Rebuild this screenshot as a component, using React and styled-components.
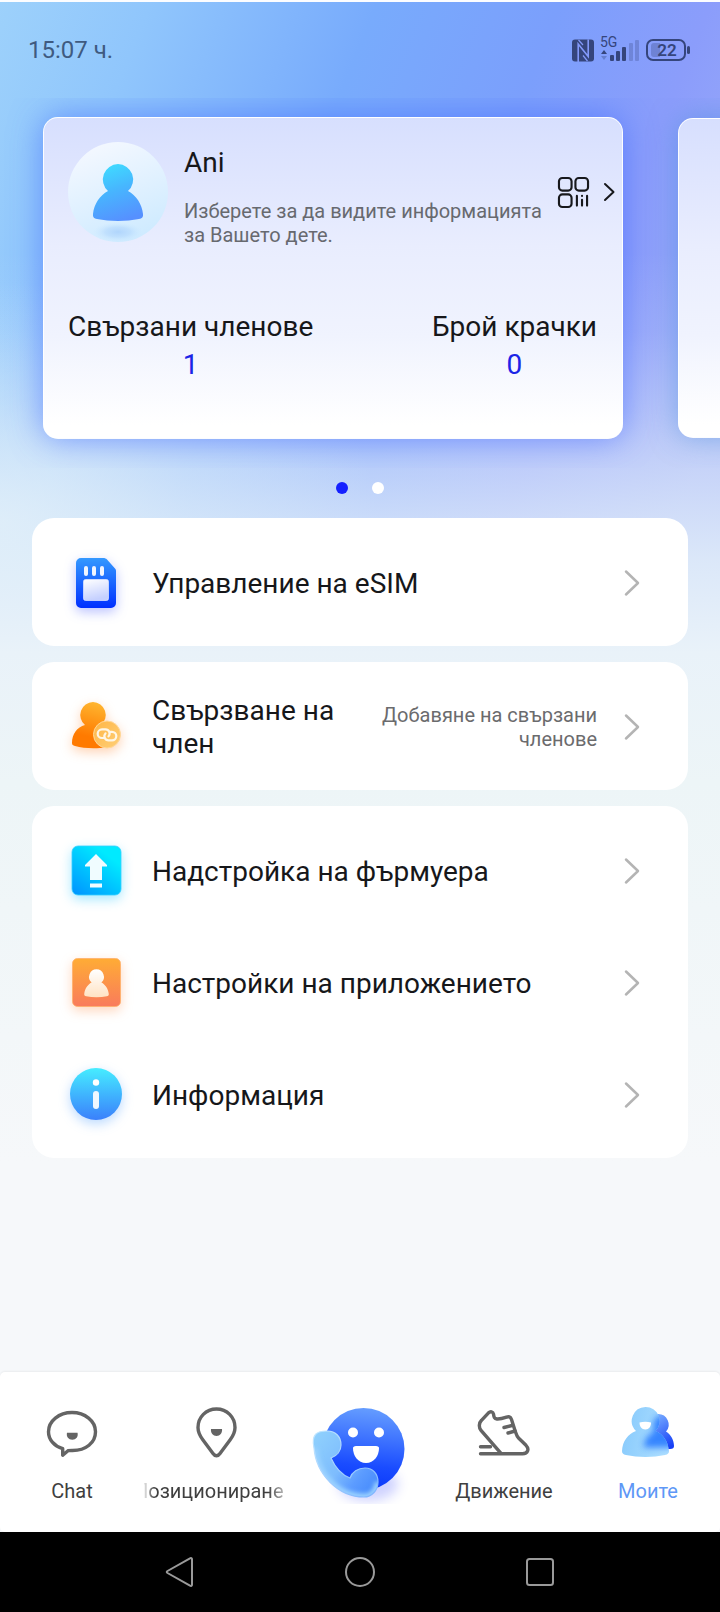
import React from "react";
import styled, { createGlobalStyle } from "styled-components";

const GlobalStyle = createGlobalStyle`
  *, *::before, *::after { box-sizing: border-box; }
  body { margin: 0; background: #f6f8fa; }
  button { font: inherit; color: inherit; background: none; border: 0; padding: 0; text-align: inherit; cursor: pointer; }
  p, h1, ul, dl, dd { margin: 0; padding: 0; }
  svg { display: block; flex: none; overflow: visible; }
`;

const Screen = styled.div`
  display: flex;
  flex-direction: column;
  min-height: 100vh;
  border-top: 2px solid #fcfdff;
  color: #16171a;
  font-family: Roboto, "Noto Sans", sans-serif;
  font-size: 28px;
  line-height: 33px;
  background:
    linear-gradient(180deg, rgba(234, 243, 249, 0) 250px, rgba(230, 241, 249, 0.12) 330px, rgba(228, 239, 249, 0.5) 440px, rgba(228, 240, 249, 0.88) 560px, #e9f2f9 650px, #edf5f7 780px, #f6f8fa 1160px),
    radial-gradient(380px 240px at 0 520px, rgba(225, 242, 248, 0.75), rgba(225, 242, 248, 0.3) 50%, rgba(225, 242, 248, 0)),
    linear-gradient(112deg, #9dd1fb 0, #90c6fc 140px, #78abfc 350px, #7b9ffc 520px, #8b9dfb 660px, #9dacf8 820px);
  background-color: #f6f8fa;
`;

const StatusBar = styled.header`
  display: flex;
  align-items: center;
  justify-content: space-between;
  height: 96px;
  padding: 0 30px 0 28px;
  color: #3f5a80;
  font-size: 24px;
`;

const StatusIcons = styled.div`
  display: flex;
  align-items: center;
  gap: 7px;
  height: 28px;
  color: #35457c;
`;

const Carousel = styled.section`
  display: flex;
  align-items: center;
  gap: 55px;
  overflow: hidden;
  padding: 19px 0 29px 43px;
`;

const ProfileCard = styled.article`
  flex: none;
  width: calc(100% - 97px);
  height: ${(p) => (p.$peek ? "320px" : "322px")};
  padding: 24px 8px 0 24px;
  border: 1px solid rgba(255, 255, 255, 0.9);
  border-radius: 15px;
  background: linear-gradient(180deg, #d7dffe 0, #e9edfe 40%, #f0f3fe 68%, #ffffff 96%);
  box-shadow: ${(p) => (p.$peek ? "0 0 28px rgba(70, 140, 220, 0.5)" : "0 0 32px rgba(65, 105, 255, 0.6)")};
`;

const Profile = styled.div`
  display: flex;
  align-items: flex-start;
  height: 106px;
`;

const ProfileText = styled.div`
  flex: 1;
  min-width: 0;
  padding: 4px 0 0 16px;
`;

const Name = styled.h1`
  font-size: 28px;
  font-weight: 400;
  line-height: 33px;
  margin-bottom: 20px;
`;

const Note = styled.p`
  color: #67696f;
  font-size: 20px;
  line-height: 24px;
`;

const QrButton = styled.button`
  display: flex;
  align-items: center;
  gap: 14px;
  height: 100px;
  flex: none;
`;

const Stats = styled.dl`
  display: flex;
  justify-content: space-between;
  padding: 62px 17px 0 0;
  text-align: center;
`;

const StatValue = styled.dd`
  margin-top: 5px;
  color: #1c24e6;
`;

const Dots = styled.div`
  display: flex;
  justify-content: center;
  gap: 24px;
  padding: 14px 0 24px;
`;

const Dot = styled.button`
  && {
    width: 12px;
    height: 12px;
    border-radius: 50%;
    background: ${(p) => (p.$on ? "#1420ff" : "#ffffff")};
  }
`;

const Menu = styled.main`
  display: flex;
  flex-direction: column;
  gap: 16px;
  padding: 0 32px 24px;
`;

const Group = styled.ul`
  list-style: none;
  && { padding: 9px 0 7px; }
  border-radius: 22px;
  background: #ffffff;
`;

const Row = styled.button`
  && {
    display: flex;
    align-items: center;
    width: 100%;
    min-height: 112px;
    padding: 0 48px 0 36px;
  }
`;

const RowTitle = styled.span`
  flex: 1;
  min-width: 0;
  margin-left: 28px;
`;

const RowHint = styled.span`
  max-width: 224px;
  color: #6b6b6d;
  font-size: 20px;
  line-height: 24px;
  text-align: right;
`;

const RowChevron = styled.svg`
  margin-left: 27px;
`;

const Glow = styled.svg`
  filter: drop-shadow(0 4px 6px ${(p) => p.$glow});
`;

const TabBar = styled.nav`
  display: grid;
  grid-template-columns: repeat(5, 1fr);
  height: 160px;
  margin-top: auto;
  border-radius: 5px;
  background: #ffffff;
  box-shadow: 0 -1px 2px rgba(0, 0, 0, 0.05);
`;

const Tab = styled.button`
  && {
    display: flex;
    flex-direction: column;
    align-items: center;
    min-width: 0;
    padding-top: ${(p) => (p.$main ? "32px" : "33px")};
    color: ${(p) => (p.$active ? "#5e97f6" : "#3f3f3f")};
    font-size: 20px;
    line-height: 24px;
  }
`;

const TabLabel = styled.span`
  width: 100%;
  margin-top: 18px;
  overflow: hidden;
  white-space: nowrap;
  text-align: ${(p) => (p.$scrolling ? "left" : "center")};
  text-indent: ${(p) => (p.$scrolling ? "-10px" : "0")};
  mask-image: ${(p) => (p.$scrolling ? "linear-gradient(90deg, rgba(0,0,0,.1) 0, #000 10px, #000 124px, rgba(0,0,0,.2) 144px)" : "none")};
`;

const SystemBar = styled.footer`
  display: grid;
  grid-template-columns: repeat(3, 1fr);
  height: 80px;
  padding: 0 12.5%;
  background: #000000;
`;

const SystemButton = styled.button`
  && {
    display: flex;
    align-items: center;
    justify-content: center;
  }
`;

const PERSON = "M0-27a15.500 15.500 0 0 1 10 27C18 4 24 13 25 23c.5 3-1 4.500-4 5-13 2.500-29 2.500-42 0-3-.5-4.500-2-4-5C-24 13-18 4-10 0A15.500 15.500 0 0 1 0-27Z";

function Avatar() {
  return (
    <svg width="100" height="100" viewBox="0 0 100 100" role="img" aria-label="Ani">
      <defs>
        <linearGradient id="avBg" x1="0.300" y1="0" x2="0.700" y2="1">
          <stop offset="0" stopColor="#f4f8ff" />
          <stop offset="1" stopColor="#cdeaff" />
        </linearGradient>
        <linearGradient id="avFig" x1="0.300" y1="0" x2="0.600" y2="1">
          <stop offset="0" stopColor="#3fdcff" />
          <stop offset="0.450" stopColor="#47b6fe" />
          <stop offset="1" stopColor="#5690ff" />
        </linearGradient>
        <radialGradient id="avShade">
          <stop offset="0" stopColor="#b0d5fc" />
          <stop offset="0.500" stopColor="#b8dbfd" stopOpacity="0.700" />
          <stop offset="1" stopColor="#cdeaff" stopOpacity="0" />
        </radialGradient>
      </defs>
      <circle cx="50" cy="50" r="50" fill="url(#avBg)" />
      <ellipse cx="50" cy="90" rx="25" ry="10" fill="url(#avShade)" />
      <path transform="translate(50 49)" d={PERSON} fill="url(#avFig)" />
    </svg>
  );
}

function NfcIcon() {
  return (
    <svg width="22" height="23" viewBox="0 0 22 23" aria-hidden="true">
      <rect width="22" height="22" y="0.500" rx="3" fill="currentColor" />
      <path d="M6.200 23V5l10 12.500V0.500" fill="none" stroke="#8399fa" strokeWidth="1.600" />
      <path d="M6.500 1 11 6M15.500 22 11 16.500" fill="none" stroke="#8399fa" strokeWidth="1.200" />
    </svg>
  );
}

function SignalIcon() {
  return (
    <svg width="38" height="24" viewBox="0 0 38 24" fill="currentColor" aria-label="5G">
      <text x="-1" y="9" fontSize="14" fontFamily="Roboto, sans-serif">5G</text>
      <path d="m0 16 3-4 3 4Z" />
      <path d="m0 18 3 4 3-4Z" opacity="0.350" />
      <rect x="9" y="17" width="4" height="6" rx="1" />
      <rect x="15" y="13" width="4" height="10" rx="1" />
      <rect x="21" y="9" width="4" height="14" rx="1" />
      <rect x="28" y="5" width="4" height="18" rx="1" opacity="0.280" />
      <rect x="34" y="2" width="4" height="21" rx="1" opacity="0.280" />
    </svg>
  );
}

function BatteryIcon() {
  return (
    <svg width="44" height="22" viewBox="0 0 44 22" fill="currentColor" aria-label="22%">
      <rect x="1" y="1" width="38" height="20" rx="6" fill="none" stroke="currentColor" strokeWidth="2" />
      <path d="M8 4h6v14H8a3 3 0 0 1-3-3V7a3 3 0 0 1 3-3Z" opacity="0.300" />
      <rect x="41" y="7" width="3" height="8" rx="1.500" />
      <text x="21" y="17" textAnchor="middle" fontSize="17" fontFamily="Roboto, sans-serif" fontWeight="600">22</text>
    </svg>
  );
}

function QrIcon() {
  return (
    <svg width="31" height="31" viewBox="0 0 32 32" fill="none" stroke="#17181c" strokeWidth="2.200" strokeLinecap="round" aria-hidden="true">
      <rect x="1" y="1" width="13" height="13" rx="3.500" />
      <rect x="18" y="1" width="13" height="13" rx="3.500" />
      <rect x="1" y="18" width="13" height="13" rx="3.500" />
      <path d="M19.500 19.500v10M24.800 23.500v6M30 19.500v10M24.800 19.500v.1" />
    </svg>
  );
}

function SimIcon() {
  return (
    <Glow $glow="rgba(60,80,255,.35)" width="56" height="56" viewBox="0 0 56 56" aria-hidden="true">
      <defs>
        <linearGradient id="simBg" x1="0" y1="0" x2="0" y2="1">
          <stop offset="0" stopColor="#3499ff" />
          <stop offset="1" stopColor="#002fff" />
        </linearGradient>
        <linearGradient id="simIn" x1="0" y1="0" x2="0.300" y2="1">
          <stop offset="0" stopColor="#ffffff" />
          <stop offset="1" stopColor="#c5d0ff" />
        </linearGradient>
      </defs>
      <path d="M13 3h22c2 0 3 .5 4 1.500l8 9c1 1 1 2 1 3V48a5 5 0 0 1-5 5H13a5 5 0 0 1-5-5V8a5 5 0 0 1 5-5Z" fill="url(#simBg)" />
      <g fill="#f0f4ff">
        <rect x="16" y="11" width="4" height="10" rx="2" />
        <rect x="24" y="11" width="4" height="10" rx="2" />
        <rect x="32" y="11" width="4" height="10" rx="2" />
      </g>
      <rect x="15.500" y="24.500" width="25" height="21" rx="2" fill="url(#simIn)" stroke="#e5eaff" strokeWidth="0.700" />
    </Glow>
  );
}

function LinkMemberIcon() {
  return (
    <Glow $glow="rgba(255,130,40,.35)" width="56" height="56" viewBox="0 0 56 56" aria-hidden="true">
      <defs>
        <linearGradient id="lmBg" x1="0.600" y1="0" x2="0.400" y2="1">
          <stop offset="0" stopColor="#ffb52f" />
          <stop offset="0.750" stopColor="#ff7a00" />
        </linearGradient>
        <linearGradient id="lmBadge" x1="0" y1="0" x2="1" y2="1">
          <stop offset="0" stopColor="#ffb645" />
          <stop offset="1" stopColor="#ffcf78" />
        </linearGradient>
      </defs>
      <path transform="translate(0 -1)" d="M25 4a13 13 0 0 1 8 23l-2 2c5 3 9 8 9 17-1 3-4 4-8 4-9 .5-18 0-25-2-2-.5-3-1-3-3C4 36 9 29 17 27A13 13 0 0 1 25 4Z" fill="url(#lmBg)" />
      <circle cx="39" cy="35.500" r="13.500" fill="url(#lmBadge)" stroke="#ffd798" strokeWidth="1" />
      <g transform="translate(0 -1)" fill="none" stroke="#fff6e6" strokeWidth="2.200" strokeLinecap="round">
        <path d="M36.500 40H34a4.300 4.300 0 0 1 0-8.600h3.500c3.500 0 5.500 4 3 7" />
        <path d="M41.500 33.800H44a4.300 4.300 0 0 1 0 8.600h-3.500c-3.500 0-5.500-4-3-7" />
      </g>
    </Glow>
  );
}

function UpgradeIcon() {
  return (
    <Glow $glow="rgba(0,190,255,.35)" width="56" height="56" viewBox="0 0 56 56" aria-hidden="true">
      <defs>
        <linearGradient id="upBg" x1="0.150" y1="1" x2="0.750" y2="0.200">
          <stop offset="0" stopColor="#0099ff" />
          <stop offset="1" stopColor="#00eaff" />
        </linearGradient>
      </defs>
      <rect x="4" y="3" width="49" height="49" rx="6" fill="url(#upBg)" stroke="#35cfff" strokeWidth="0.800" />
      <path d="M28 11 39 22v1.500h-5V37H22V23.500h-5V22Z M22 40.500h12v4H22Z" fill="#f0fcff" />
    </Glow>
  );
}

function SettingsIcon() {
  return (
    <Glow $glow="rgba(255,140,70,.35)" width="56" height="56" viewBox="0 0 56 56" aria-hidden="true">
      <defs>
        <linearGradient id="stBg" x1="0" y1="0" x2="0" y2="1">
          <stop offset="0" stopColor="#ffac35" />
          <stop offset="1" stopColor="#f97b5c" />
        </linearGradient>
        <linearGradient id="stFig" x1="0" y1="0" x2="0" y2="1">
          <stop offset="0" stopColor="#ffffff" />
          <stop offset="1" stopColor="#ffe3c4" />
        </linearGradient>
      </defs>
      <rect x="4.500" y="3.500" width="48" height="48" rx="5" fill="url(#stBg)" stroke="#ffb069" strokeWidth="0.800" />
      <path transform="translate(28.500 27.500) scale(.49)" d={PERSON} fill="url(#stFig)" />
    </Glow>
  );
}

function InfoIcon() {
  return (
    <Glow $glow="rgba(60,150,255,.35)" width="56" height="56" viewBox="0 0 56 56" aria-hidden="true">
      <defs>
        <linearGradient id="inBg" x1="0" y1="0" x2="0" y2="1">
          <stop offset="0" stopColor="#46edff" />
          <stop offset="0.550" stopColor="#3fb0fe" />
          <stop offset="1" stopColor="#3b80fb" />
        </linearGradient>
      </defs>
      <circle cx="28" cy="27" r="26" fill="url(#inBg)" />
      <circle cx="28" cy="15.500" r="3.200" fill="#ffffff" />
      <rect x="25" y="24" width="6" height="18" rx="3" fill="#eef8ff" />
    </Glow>
  );
}

function ChatIcon() {
  return (
    <svg width="56" height="56" viewBox="0 0 56 56" fill="none" stroke="#646464" strokeWidth="3.400" strokeLinejoin="round" aria-hidden="true">
      <path d="M28 7.500c13 0 23.500 8.500 23.500 19.200C51.500 37.500 42 45.700 28 45.500c-2 0-3 0-4 .2l-5.300 4.500v-6.500C10 41 4.500 34.500 4.500 26.700 4.500 16 15 7.500 28 7.500Z" />
      <path d="M23 27.700h10.500c1 4-1.500 7-5.200 7s-6.300-3-5.300-7Z" fill="#646464" stroke="none" />
    </svg>
  );
}

function PinIcon() {
  return (
    <svg width="56" height="56" viewBox="0 0 56 56" fill="none" stroke="#646464" strokeWidth="3.400" strokeLinejoin="round" aria-hidden="true">
      <path d="M28.500 4C39 4 47 12.200 47 22.500c0 5-2 8.500-4.800 12.300L32 48.500c-2 3-5 3-7 0L14.800 34.800C12 31 10 27.500 10 22.500 10 12.200 18 4 28.500 4Z" />
      <path d="M23 24h11c.5 4-2 7-5.500 7S22.500 28 23 24Z" fill="#646464" stroke="none" />
    </svg>
  );
}

function CallIcon() {
  return (
    <svg width="100" height="100" viewBox="0 0 100 100" aria-hidden="true">
      <defs>
        <linearGradient id="clBg" x1="0.550" y1="0" x2="0.450" y2="1">
          <stop offset="0" stopColor="#659dff" />
          <stop offset="0.700" stopColor="#1a4cff" />
          <stop offset="1" stopColor="#0a38fa" />
        </linearGradient>
        <linearGradient id="clPhone" x1="0" y1="0.100" x2="1" y2="0.900">
          <stop offset="0" stopColor="#8fd0fd" />
          <stop offset="0.480" stopColor="#7dbcfd" />
          <stop offset="0.720" stopColor="#5c9cff" />
          <stop offset="1" stopColor="#4388fb" />
        </linearGradient>
        <linearGradient id="clRim" x1="0" y1="0" x2="1" y2="1">
          <stop offset="0" stopColor="#c4e8ff" />
          <stop offset="1" stopColor="#7db4ff" />
        </linearGradient>
        <filter id="clBlur" x="-50%" y="-50%" width="200%" height="200%">
          <feGaussianBlur stdDeviation="6" />
        </filter>
        <filter id="clSoft" x="-20%" y="-20%" width="140%" height="140%">
          <feGaussianBlur stdDeviation="2" />
        </filter>
        <clipPath id="clCrop"><path d="M-10-10h120v110H-10z" /></clipPath>
        <clipPath id="clPhoneClip">
          <path d="M4 44C1 30 7 27 17 27c9 0 14 6 14 14 0 6-4 11-10 13 4 9 11 17 19 20 2-6 8-10 15-10 8 0 13 6 13 14s-6 15-14 15C28 93 6 70 4 44Z" />
        </clipPath>
      </defs>
      <g clipPath="url(#clCrop)">
        <ellipse cx="58" cy="80" rx="30" ry="17" fill="#5560ff" opacity="0.280" filter="url(#clBlur)" />
      </g>
      <circle cx="53.500" cy="45" r="41" fill="url(#clBg)" />
      <circle cx="43" cy="28.500" r="5" fill="#ffffff" />
      <circle cx="69" cy="28.500" r="5" fill="#ffffff" />
      <path d="M43 44c0-1 1-2 3-2h20c2 0 3 1 3 2 0 8-5 15-13 15s-13-7-13-15Z" fill="#ffffff" />
      <path d="M4 44C1 30 7 27 17 27c9 0 14 6 14 14 0 6-4 11-10 13 4 9 11 17 19 20 2-6 8-10 15-10 8 0 13 6 13 14s-6 15-14 15C28 93 6 70 4 44Z" fill="url(#clPhone)" />
      <g clipPath="url(#clPhoneClip)">
        <path d="M4 44C6 70 28 93 54 93c8 0 14-7 14-15" fill="none" stroke="#9bd3ff" strokeWidth="7" filter="url(#clSoft)" />
      </g>
      <path d="M4 44C1 30 7 27 17 27c9 0 14 6 14 14 0 6-4 11-10 13 4 9 11 17 19 20 2-6 8-10 15-10 8 0 13 6 13 14s-6 15-14 15C28 93 6 70 4 44Z" fill="none" stroke="url(#clRim)" strokeWidth="1.200" />
    </svg>
  );
}

function ShoeIcon() {
  return (
    <svg width="56" height="56" viewBox="0 0 56 56" fill="none" stroke="#646464" strokeWidth="3.400" strokeLinecap="round" strokeLinejoin="round" aria-hidden="true">
      <path d="M4.500 48.800h42c5.500 0 7-4.800 3.500-8.500L42.500 33c-1-1-2-3-3-6l-4-12.500c-1-3-3-3-5-2.300-3 1-6 2-9.500 1.800-3-.5-3-2-3.500-5-.5-2.500-3-3-5-1.200l-7 7.500c-2.500 2.500-3 7-.5 10l20 23M4.500 41.800h10" />
      <path d="m28 22.500 8-2M32 28l7-2" />
    </svg>
  );
}

function FamilyIcon() {
  return (
    <svg width="56" height="56" viewBox="0 0 56 56" aria-hidden="true">
      <defs>
        <linearGradient id="fmBack" x1="0.300" y1="0" x2="0.700" y2="1">
          <stop offset="0" stopColor="#75a9ff" />
          <stop offset="1" stopColor="#163ff6" />
        </linearGradient>
        <linearGradient id="fmFront" x1="0" y1="0.300" x2="1" y2="0.500">
          <stop offset="0" stopColor="#86c9fc" />
          <stop offset="1" stopColor="#b0e0ff" />
        </linearGradient>
        <clipPath id="fmClip">
          <path d="M26.500 3a14 14 0 0 1 10 24C44 30 49 37 50 47c0 2-1 3.500-4 4-12 2.500-27 2.500-39 0-3-.5-4-2-4-4 .5-10 6-17 14-20A14 14 0 0 1 26.500 3Z" />
        </clipPath>
        <filter id="fmBlur" x="-50%" y="-50%" width="200%" height="200%">
          <feGaussianBlur stdDeviation="3" />
        </filter>
      </defs>
      <g transform="translate(-1 -1)">
        <path d="M39 10a10.500 10.500 0 0 1 8 17.500c5 3 8 9 8 14.500 0 2-1 3-4 3H34V12Z" fill="url(#fmBack)" />
        <g clipPath="url(#fmClip)">
          <rect width="56" height="56" fill="url(#fmFront)" />
          <path d="M41 11a10 10 0 0 1 6 16.500c5 3 8 9 8 16H25c0-8 4-12 10-16-2-7 0-14 6-16.500Z" fill="#2a7bff" opacity="0.900" filter="url(#fmBlur)" />
        </g>
        <path d="M20.500 18.500c3.500-1 8-1 11.500 0 0 4-2 7-5.700 7s-5.800-3-5.800-7Z" fill="#ffffff" />
      </g>
    </svg>
  );
}

const menuGroups = [
  [{ title: "Управление на eSIM", Icon: SimIcon }],
  [{ title: "Свързване на член", Icon: LinkMemberIcon, hint: "Добавяне на свързани членове" }],
  [
    { title: "Надстройка на фърмуера", Icon: UpgradeIcon },
    { title: "Настройки на приложението", Icon: SettingsIcon },
    { title: "Информация", Icon: InfoIcon },
  ],
];

const tabs = [
  { label: "Chat", Icon: ChatIcon },
  { label: "Позициониране", Icon: PinIcon, scrolling: true },
  { Icon: CallIcon, main: true },
  { label: "Движение", Icon: ShoeIcon },
  { label: "Моите", Icon: FamilyIcon, active: true },
];

function MenuRow({ title, hint, Icon }) {
  return (
    <li>
      <Row type="button">
        <Icon />
        <RowTitle>{title}</RowTitle>
        {hint && <RowHint>{hint}</RowHint>}
        <RowChevron width="16" height="26" viewBox="0 0 16 26" fill="none" stroke="#b4b4b4" strokeWidth="2.500" strokeLinecap="round" strokeLinejoin="round" aria-hidden="true">
          <path d="m2 1.500 12 11.500L2 24.500" />
        </RowChevron>
      </Row>
    </li>
  );
}

export default function App() {
  return (
    <>
      <GlobalStyle />
      <Screen>
        <StatusBar>
          <time>15:07 ч.</time>
          <StatusIcons>
            <NfcIcon />
            <SignalIcon />
            <BatteryIcon />
          </StatusIcons>
        </StatusBar>

        <Carousel>
          <ProfileCard>
            <Profile>
              <Avatar />
              <ProfileText>
                <Name>Ani</Name>
                <Note>Изберете за да видите информацията за Вашето дете.</Note>
              </ProfileText>
              <QrButton type="button" aria-label="QR">
                <QrIcon />
                <svg width="11" height="18" viewBox="0 0 11 18" fill="none" stroke="#17181c" strokeWidth="2" strokeLinecap="round" strokeLinejoin="round" aria-hidden="true">
                  <path d="m2 1 8.500 8L2 17" />
                </svg>
              </QrButton>
            </Profile>
            <Stats>
              <div>
                <dt>Свързани членове</dt>
                <StatValue>1</StatValue>
              </div>
              <div>
                <dt>Брой крачки</dt>
                <StatValue>0</StatValue>
              </div>
            </Stats>
          </ProfileCard>
          <ProfileCard $peek />
        </Carousel>

        <Dots>
          <Dot type="button" aria-label="1" $on />
          <Dot type="button" aria-label="2" />
        </Dots>

        <Menu>
          {menuGroups.map((rows) => (
            <Group key={rows[0].title}>
              {rows.map((row) => (
                <MenuRow key={row.title} {...row} />
              ))}
            </Group>
          ))}
        </Menu>

        <TabBar>
          {tabs.map(({ label, Icon, main, active, scrolling }) => (
            <Tab key={label || "call"} type="button" $main={main} $active={active} aria-label={label || "Call"}>
              <Icon />
              {label && <TabLabel $scrolling={scrolling}>{label}</TabLabel>}
            </Tab>
          ))}
        </TabBar>

        <SystemBar>
          <SystemButton type="button" aria-label="Back">
            <svg width="28" height="30" viewBox="0 0 28 30" fill="none" stroke="#9a9a9a" strokeWidth="2" strokeLinejoin="round">
              <path d="M1.500 14 24 1.300c1-.5 2 0 2 1v25.400c0 1-1 1.500-2 1L1.500 16c-1-.6-1-1.400 0-2Z" />
            </svg>
          </SystemButton>
          <SystemButton type="button" aria-label="Home">
            <svg width="30" height="30" viewBox="0 0 30 30" fill="none" stroke="#9a9a9a" strokeWidth="2">
              <circle cx="15" cy="15" r="14" />
            </svg>
          </SystemButton>
          <SystemButton type="button" aria-label="Recent">
            <svg width="28" height="28" viewBox="0 0 28 28" fill="none" stroke="#9a9a9a" strokeWidth="2">
              <rect x="1" y="1" width="26" height="26" rx="2.500" />
            </svg>
          </SystemButton>
        </SystemBar>
      </Screen>
    </>
  );
}
